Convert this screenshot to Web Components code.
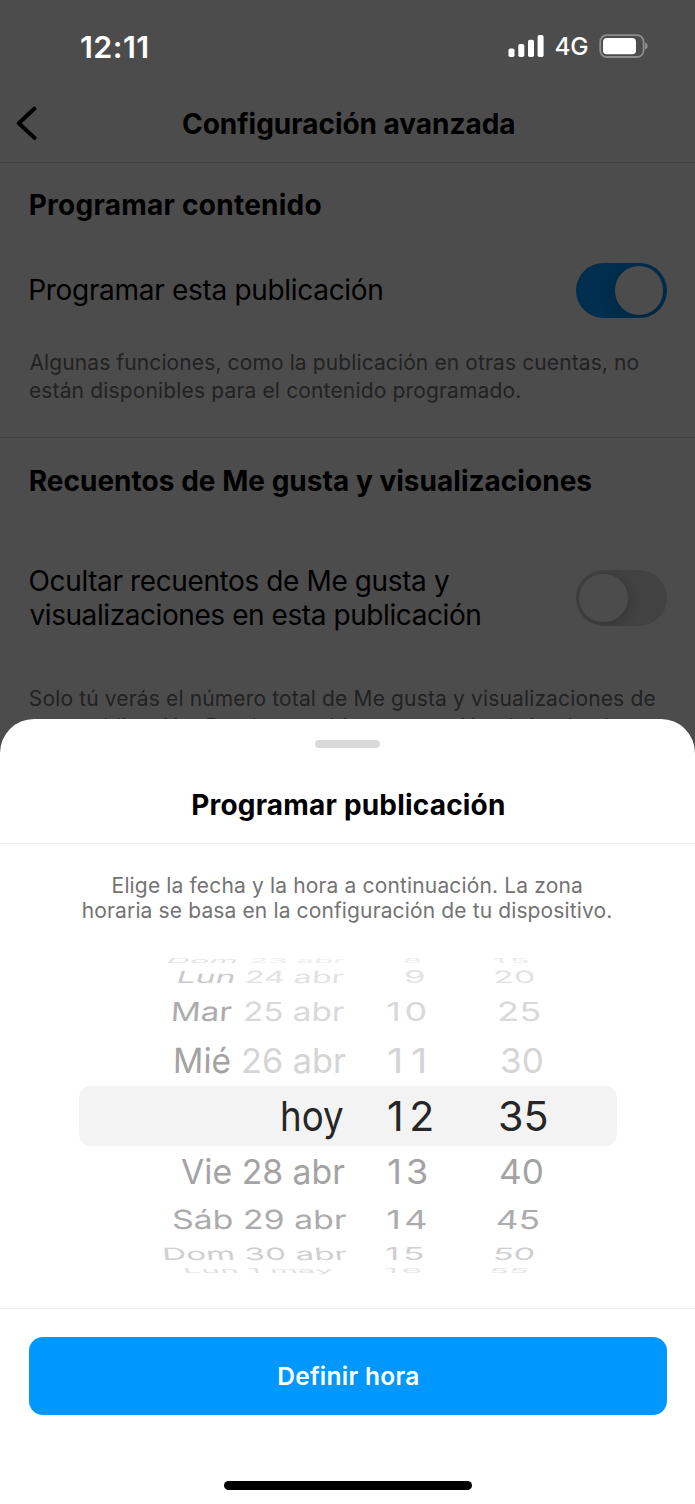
<!DOCTYPE html>
<html lang="es">
<head>
<meta charset="utf-8">
<title>Programar publicación</title>
<style>
html,body{margin:0;padding:0;background:#4c4c4c}
body{width:695px;height:1504px;overflow:hidden;font-family:Inter,"Liberation Sans",sans-serif;color:#000}
</style>
</head>
<body>
<app-screen></app-screen>
<script>
const FAMILY = 'Inter, "Liberation Sans", sans-serif';
const ctx = document.createElement('canvas').getContext('2d');

// One line of text whose inked width is set by "w"; the glyph box is centred on the cap height.
class FitText extends HTMLElement {
  connectedCallback() {
    const a = (n, d) => this.hasAttribute(n) ? +this.getAttribute(n) : d;
    const size = a('size', 28), weight = a('weight', 400), w = a('w', 100), lh = a('lh', 34);
    const text = this.textContent;
    // Measured at ten times the size, because the canvas rounds its ink box to whole pixels.
    ctx.font = `${weight} ${size * 10}px ${FAMILY}`;
    const m = ctx.measureText(text);
    const left = m.actualBoundingBoxLeft / 10;
    const ink = left + m.actualBoundingBoxRight / 10;
    const sy = a('sy', 0), skew = a('skew', 0);
    const fit = w - 1.2;
    const sx = sy ? a('sx', fit / ink) : 1;
    const spacing = text.length > 1 ? (fit / sx - ink) / (text.length - 1) : 0;
    const r = this.attachShadow({mode: 'open'});
    r.innerHTML = `<style>
      :host{display:block;flex:none;width:${w}px;height:${lh}px;margin-left:${a('x', 0)}px;white-space:nowrap}
      span{display:block;width:max-content;font:${weight} ${size}px/${lh}px ${FAMILY};letter-spacing:${spacing.toFixed(3)}px;
        margin-left:${left * sx + .9}px;transform-origin:0 50%;
        ${sy ? `transform:skewX(${skew}deg) scale(${sx},${sy})` : ''}}
      </style><span><slot></slot></span>`;
  }
}
customElements.define('fit-text', FitText);

class StatusBar extends HTMLElement {
  constructor() {
    super();
    this.attachShadow({mode: 'open'}).innerHTML = `<style>
      :host{display:flex;height:87px;padding-top:5px;box-sizing:border-box;align-items:center;color:#fff}
      .sig{margin-left:360px;flex:none} .bat{margin-left:11px;flex:none}
      </style>
      <fit-text x="80" w="67.5" size="30.5" weight="600" lh="35">12:11</fit-text>
      <svg class="sig" width="37" height="24" viewBox="0 0 37 24" fill="#fff"><rect x=".5" y="14.5" width="6" height="8.5" rx="1.8"/><rect x="10.3" y="10" width="6" height="13" rx="1.8"/><rect x="20" y="5.7" width="6" height="17.3" rx="1.8"/><rect x="29.6" y="1" width="6" height="22" rx="1.8"/></svg>
      <fit-text x="10.5" w="32.5" size="24.5" weight="500" lh="35">4G</fit-text>
      <svg class="bat" width="50" height="25" viewBox="0 0 50 25"><rect x="1.2" y="1.2" width="43.4" height="21.8" rx="6.5" fill="none" stroke="#8d8d8d" stroke-width="1.8"/><rect x="4" y="4" width="33" height="16.2" rx="3.8" fill="#fff"/><path d="M46 8.6c3.6 1.3 3.6 5.8 0 7z" fill="#8d8d8d"/></svg>`;
  }
}
customElements.define('status-bar', StatusBar);

class NavBar extends HTMLElement {
  constructor() {
    super();
    this.attachShadow({mode: 'open'}).innerHTML = `<style>
      :host{display:flex;height:76px;box-sizing:border-box;padding-bottom:.5px;align-items:center;border-bottom:1.5px solid #414141}
      svg{margin-left:14px;flex:none}
      </style>
      <svg width="26" height="36" viewBox="0 0 26 36"><path d="M20.5 2.5 4.8 17.2l15.7 14.7" fill="none" stroke="#000" stroke-width="4" stroke-linecap="round" stroke-linejoin="round"/></svg>
      <slot></slot>`;
  }
}
customElements.define('nav-bar', NavBar);

class ToggleSwitch extends HTMLElement {
  constructor() {
    super();
    this.attachShadow({mode: 'open'}).innerHTML = `<style>
      :host{display:flex;box-sizing:border-box;width:91px;height:55.5px;padding:3.5px;border-radius:28px;background:#424242;flex:none;overflow:hidden}
      :host([on]){background:#002e4e;justify-content:flex-end}
      i{width:48.5px;height:48.5px;border-radius:50%;background:#4c4c4c;box-shadow:0 3px 12px 2px rgba(0,0,0,.16)}
      </style><i></i>`;
  }
}
customElements.define('toggle-switch', ToggleSwitch);

class SettingsSection extends HTMLElement {
  constructor() {
    super();
    this.attachShadow({mode: 'open'}).innerHTML = `<style>
      :host{display:block;box-sizing:border-box}
      .row{display:flex;justify-content:space-between;align-items:center;padding:0 28.5px 0 29px}
      .note{color:#222;padding-left:29px}
      .head{padding-left:29.5px}
      </style><div class="head"><slot name="head"></slot></div>
      <div class="row"><div><slot name="label"></slot></div><slot name="control"></slot></div>
      <div class="note"><slot name="note"></slot></div>`;
  }
  connectedCallback() {
    this.shadowRoot.querySelector('.row').style.marginTop = this.getAttribute('gap-a') + 'px';
    this.shadowRoot.querySelector('.note').style.marginTop = this.getAttribute('gap-b') + 'px';
  }
}

// Rows of the wheel: height, cap scale, then tokens [text, ink left, ink right, colour, skew, glyph width scale].
const FAR = '#d5d5d5', MID = '#a3a3a3';
const ROWS = [
  [10, .19, [['Dom',169,237,'#e2e2e2',-38],['23 abr',250,345,'#eeeeee',-15],['8',404,421,'#ebebeb',0],['15',493,529,'#ebebeb',15,.93]]],
  [22, .47, [['Lun',179,234,'#cacaca',-16],['24 abr',246.5,344,'#e2e2e2',-6],['9',405,424,'#e2e2e2',0],['20',494.5,534,'#e2e2e2',6]]],
  [47, .73, [['Mar',173,232,'#acacac',-4],['25 abr',244,344,'#d9d9d9',-2],['10',387,425.5,'#d9d9d9',0,1]  ,['25',498.5,540,'#d9d9d9',2]]],
  [51, .96, [['Mié',174.5,230,MID,-1],['26 abr',242,345.5,FAR,0],['11',387.5,424,FAR,0,1.12],['30',500.5,542,FAR,0]]],
  [60, 1.14, [['hoy',281,343,'#262626',0],['12',388,432,'#262626',0,1.14],['35',499,547,'#262626',0]]],
  [51, .96, [['Vie 28 abr',181,345,MID,0],['13',388,426.5,MID,0,1]  ,['40',499.5,542,MID,0]]],
  [45, .73, [['Sáb 29 abr',172.5,346,'#acacac',1],['14',387,426,'#acacac',0,1]  ,['45',497,539,'#acacac',-3]]],
  [24, .47, [['Dom 30 abr',163.5,346.5,'#cfcfcf',6],['15',386,423.5,'#cfcfcf',0,.98],['50',494.5,534,'#cfcfcf',-8]]],
  [9, .19, [['Lun 1 may',185,333,'#e0e0e0',20],['16',385,421,'#e4e4e4',0,.95],['55',490.5,528,'#e4e4e4',-20]]],
];
class TimeWheel extends HTMLElement {
  constructor() {
    super();
    const rows = ROWS.map(([h, sy, toks], i) => {
      let at = 78.5;
      return `<div class="r${i === 4 ? ' sel' : ''}" style="height:${h}px">` + toks.map(([t, l, r, c, k, sx]) => {
        const s = `<fit-text style="color:${c}" x="${l - at}" w="${r - l}" size="36" lh="${h}" sy="${sy}" skew="${k}"${sx ? ` sx="${sx}"` : ''}>${t}</fit-text>`;
        at = r; return s;
      }).join('') + '</div>';
    }).join('');
    this.attachShadow({mode: 'open'}).innerHTML = `<style>
      :host{display:flex;flex-direction:column;margin:0 78.5px;height:319px;flex:none}
      .r{display:flex;align-items:center;flex:none}
      .sel{background:#f3f3f3;border-radius:12px}
      </style>${rows}`;
  }
}
customElements.define('time-wheel', TimeWheel);

class BottomSheet extends HTMLElement {
  constructor() {
    super();
    this.attachShadow({mode: 'open'}).innerHTML = `<style>
      :host{display:flex;flex-direction:column;position:absolute;left:0;top:718.5px;width:695px;height:785.5px;background:#fff;border-radius:34px 34px 0 0;overflow:hidden}
      .grip{width:64.5px;height:7.5px;border-radius:4px;background:#dadada;margin:21.5px auto 0;flex:none}
      .title{padding-top:40.5px;height:54.5px;border-bottom:1.5px solid #ececec;flex:none}
      .hint{color:#737373;padding:29px 0 0;height:112px;box-sizing:border-box;flex:none}
      .foot{border-top:1.5px solid #ececec;margin-top:33px;padding:28px 28.5px 0 29px;flex:1}
      button{display:flex;align-items:center;width:100%;height:78px;border:0;padding:0;border-radius:14px;background:#0098ff;color:#fff}
      .home{width:247.5px;height:9.5px;border-radius:5px;background:#000;margin:66px 0 0 195px}
      </style>
      <div class="grip"></div>
      <div class="title"><fit-text x="192" w="312" size="28" weight="700" lh="34">Programar publicación</fit-text></div>
      <div class="hint"><fit-text x="112.5" w="469" size="21" lh="25">Elige la fecha y la hora a continuación. La zona</fit-text><fit-text x="82.5" w="528.5" size="21" lh="25">horaria se basa en la configuración de tu dispositivo.</fit-text></div>
      <time-wheel></time-wheel>
      <div class="foot"><button><fit-text x="249" w="140" size="24.5" weight="600" lh="34">Definir hora</fit-text></button><div class="home"></div></div>`;
  }
}
customElements.define('bottom-sheet', BottomSheet);

class AppScreen extends HTMLElement {
  constructor() {
    super();
    this.attachShadow({mode: 'open'}).innerHTML = `<style>
      :host{display:block;position:relative;width:695px;height:1504px;background:#4c4c4c;overflow:hidden}
      .one{height:275px;padding-top:25px;border-bottom:1.5px solid #424242}
      .two{padding-top:26px}
      </style>
      <status-bar></status-bar>
      <nav-bar><fit-text x="142" w="332.5" size="28" weight="700">Configuración avanzada</fit-text></nav-bar>
      <settings-section class="one" gap-a="40.5" gap-b="31">
        <fit-text slot="head" w="291.5" weight="700">Programar contenido</fit-text>
        <fit-text slot="label" x=".5" w="352.5" lh="36">Programar esta publicación</fit-text>
        <toggle-switch slot="control" on></toggle-switch>
        <fit-text slot="note" w="609.5" size="21" lh="28">Algunas funciones, como la publicación en otras cuentas, no</fit-text>
        <fit-text slot="note" w="491" size="21" lh="28">están disponibles para el contenido programado.</fit-text>
      </settings-section>
      <settings-section class="two" gap-a="66" gap-b="52.5">
        <fit-text slot="head" w="562" weight="700">Recuentos de Me gusta y visualizaciones</fit-text>
        <fit-text slot="label" w="420.5">Ocultar recuentos de Me gusta y</fit-text>
        <fit-text slot="label" w="451">visualizaciones en esta publicación</fit-text>
        <toggle-switch slot="control"></toggle-switch>
        <fit-text slot="note" w="626" size="21" lh="28">Solo tú verás el número total de Me gusta y visualizaciones de</fit-text>
        <fit-text slot="note" w="579" size="21" lh="28">esta publicación. Puedes cambiar esta opción abriendo el</fit-text>
      </settings-section>
      <bottom-sheet></bottom-sheet>`;
  }
}
customElements.define('settings-section', SettingsSection);
customElements.define('app-screen', AppScreen);
</script>
</body>
</html>
